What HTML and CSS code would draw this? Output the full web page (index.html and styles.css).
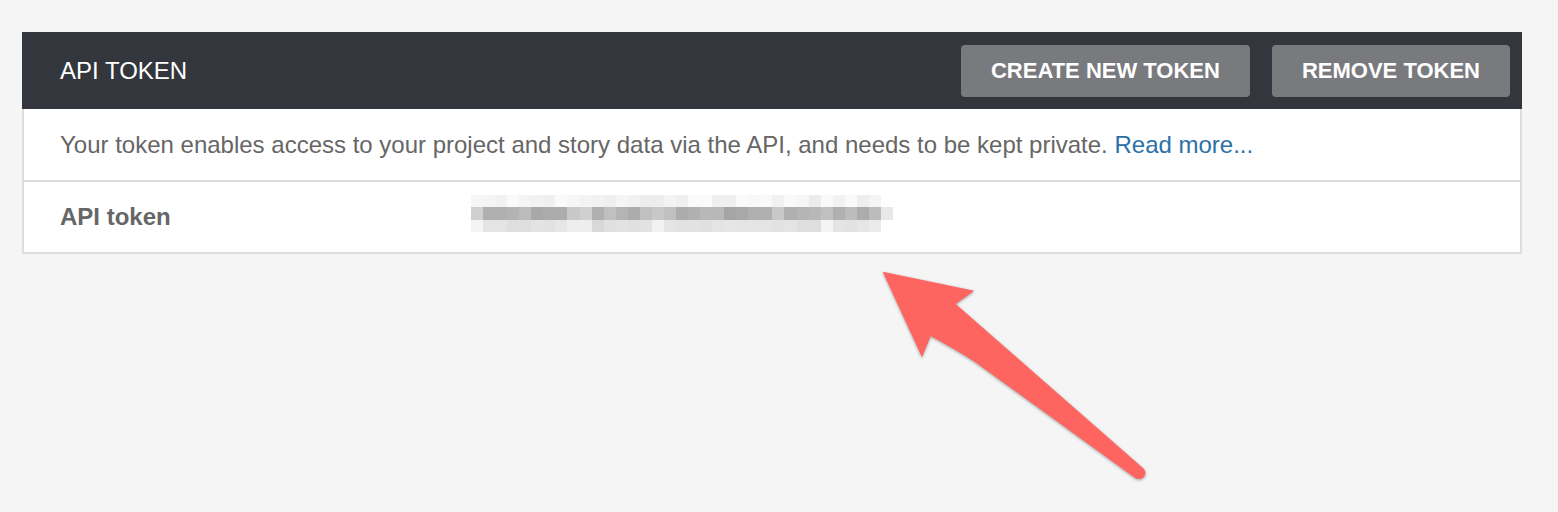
FILE: index.html
```html
<!DOCTYPE html>
<html>
<head>
<meta charset="utf-8">
<link rel="stylesheet" href="styles.css">
</head>
<body>
<section class="panel">
  <header class="panel-head">
    <h2 class="panel-title">API TOKEN</h2>
    <div class="actions">
      <button class="btn">CREATE NEW TOKEN</button>
      <button class="btn">REMOVE TOKEN</button>
    </div>
  </header>
  <div class="panel-body">
    <div class="row desc">Your token enables access to your project and story data via the API, and needs to be kept private. <a href="#" class="link">Read more...</a></div>
    <div class="row field">
      <span class="label">API token</span>
      <svg class="token" width="422" height="37" viewBox="0 0 35 3" preserveAspectRatio="none" shape-rendering="crispEdges">
        <g>
          <rect x="0" y="0" width="1" height="1" fill="#f6f6f6"/><rect x="1" y="0" width="1" height="1" fill="#f5f5f5"/><rect x="2" y="0" width="1" height="1" fill="#f2f2f2"/><rect x="3" y="0" width="1" height="1" fill="#fafafa"/><rect x="4" y="0" width="1" height="1" fill="#f4f4f4"/><rect x="5" y="0" width="1" height="1" fill="#f2f2f2"/><rect x="6" y="0" width="1" height="1" fill="#f0f0f0"/><rect x="7" y="0" width="1" height="1" fill="#fafafa"/><rect x="8" y="0" width="1" height="1" fill="#f6f6f6"/><rect x="9" y="0" width="1" height="1" fill="#f3f3f3"/><rect x="10" y="0" width="1" height="1" fill="#f2f2f2"/><rect x="11" y="0" width="1" height="1" fill="#efefef"/><rect x="12" y="0" width="1" height="1" fill="#f5f5f5"/><rect x="13" y="0" width="1" height="1" fill="#f2f2f2"/><rect x="14" y="0" width="1" height="1" fill="#ededed"/><rect x="15" y="0" width="1" height="1" fill="#ededed"/><rect x="16" y="0" width="1" height="1" fill="#f3f3f3"/><rect x="17" y="0" width="1" height="1" fill="#f0f0f0"/><rect x="18" y="0" width="1" height="1" fill="#fafafa"/><rect x="19" y="0" width="1" height="1" fill="#fafafa"/><rect x="20" y="0" width="1" height="1" fill="#efefef"/><rect x="21" y="0" width="1" height="1" fill="#efefef"/><rect x="22" y="0" width="1" height="1" fill="#fafafa"/><rect x="23" y="0" width="1" height="1" fill="#f8f8f8"/><rect x="24" y="0" width="1" height="1" fill="#f9f9f9"/><rect x="25" y="0" width="1" height="1" fill="#f1f1f1"/><rect x="26" y="0" width="1" height="1" fill="#f9f9f9"/><rect x="27" y="0" width="1" height="1" fill="#f6f6f6"/><rect x="28" y="0" width="1" height="1" fill="#ececec"/><rect x="29" y="0" width="1" height="1" fill="#f9f9f9"/><rect x="30" y="0" width="1" height="1" fill="#f2f2f2"/><rect x="31" y="0" width="1" height="1" fill="#f9f9f9"/><rect x="32" y="0" width="1" height="1" fill="#eeeeee"/><rect x="33" y="0" width="1" height="1" fill="#f4f4f4"/>
        </g>
        <g>
          <rect x="0" y="1" width="1" height="1" fill="#d0d0d0"/><rect x="1" y="1" width="1" height="1" fill="#b0b0b0"/><rect x="2" y="1" width="1" height="1" fill="#b0b0b0"/><rect x="3" y="1" width="1" height="1" fill="#b3b3b3"/><rect x="4" y="1" width="1" height="1" fill="#bcbcbc"/><rect x="5" y="1" width="1" height="1" fill="#a8a8a8"/><rect x="6" y="1" width="1" height="1" fill="#acacac"/><rect x="7" y="1" width="1" height="1" fill="#acacac"/><rect x="8" y="1" width="1" height="1" fill="#c8c8c8"/><rect x="9" y="1" width="1" height="1" fill="#d0d0d0"/><rect x="10" y="1" width="1" height="1" fill="#b0b0b0"/><rect x="11" y="1" width="1" height="1" fill="#c0c0c0"/><rect x="12" y="1" width="1" height="1" fill="#b4b4b4"/><rect x="13" y="1" width="1" height="1" fill="#acacac"/><rect x="14" y="1" width="1" height="1" fill="#c0c0c0"/><rect x="15" y="1" width="1" height="1" fill="#c8c8c8"/><rect x="16" y="1" width="1" height="1" fill="#c0c0c0"/><rect x="17" y="1" width="1" height="1" fill="#acacac"/><rect x="18" y="1" width="1" height="1" fill="#b0b0b0"/><rect x="19" y="1" width="1" height="1" fill="#b8b8b8"/><rect x="20" y="1" width="1" height="1" fill="#b8b8b8"/><rect x="21" y="1" width="1" height="1" fill="#a5a5a5"/><rect x="22" y="1" width="1" height="1" fill="#a8a8a8"/><rect x="23" y="1" width="1" height="1" fill="#b0b0b0"/><rect x="24" y="1" width="1" height="1" fill="#b0b0b0"/><rect x="25" y="1" width="1" height="1" fill="#c8c8c8"/><rect x="26" y="1" width="1" height="1" fill="#b0b0b0"/><rect x="27" y="1" width="1" height="1" fill="#b4b4b4"/><rect x="28" y="1" width="1" height="1" fill="#b8b8b8"/><rect x="29" y="1" width="1" height="1" fill="#c0c0c0"/><rect x="30" y="1" width="1" height="1" fill="#b0b0b0"/><rect x="31" y="1" width="1" height="1" fill="#bcbcbc"/><rect x="32" y="1" width="1" height="1" fill="#acacac"/><rect x="33" y="1" width="1" height="1" fill="#bcbcbc"/><rect x="34" y="1" width="1" height="1" fill="#e8e8e8"/>
        </g>
        <g>
          <rect x="0" y="2" width="1" height="1" fill="#f4f4f4"/><rect x="1" y="2" width="1" height="1" fill="#e4e4e4"/><rect x="2" y="2" width="1" height="1" fill="#e4e4e4"/><rect x="3" y="2" width="1" height="1" fill="#dedede"/><rect x="4" y="2" width="1" height="1" fill="#dedede"/><rect x="5" y="2" width="1" height="1" fill="#e4e4e4"/><rect x="6" y="2" width="1" height="1" fill="#e2e2e2"/><rect x="7" y="2" width="1" height="1" fill="#e6e6e6"/><rect x="8" y="2" width="1" height="1" fill="#eeeeee"/><rect x="9" y="2" width="1" height="1" fill="#eeeeee"/><rect x="10" y="2" width="1" height="1" fill="#d8d8d8"/><rect x="11" y="2" width="1" height="1" fill="#e0e0e0"/><rect x="12" y="2" width="1" height="1" fill="#e2e2e2"/><rect x="13" y="2" width="1" height="1" fill="#e0e0e0"/><rect x="14" y="2" width="1" height="1" fill="#e2e2e2"/><rect x="15" y="2" width="1" height="1" fill="#f2f2f2"/><rect x="16" y="2" width="1" height="1" fill="#e4e4e4"/><rect x="17" y="2" width="1" height="1" fill="#e2e2e2"/><rect x="18" y="2" width="1" height="1" fill="#e2e2e2"/><rect x="19" y="2" width="1" height="1" fill="#e0e0e0"/><rect x="20" y="2" width="1" height="1" fill="#e4e4e4"/><rect x="21" y="2" width="1" height="1" fill="#e6e6e6"/><rect x="22" y="2" width="1" height="1" fill="#e4e4e4"/><rect x="23" y="2" width="1" height="1" fill="#e4e4e4"/><rect x="24" y="2" width="1" height="1" fill="#e4e4e4"/><rect x="25" y="2" width="1" height="1" fill="#e2e2e2"/><rect x="26" y="2" width="1" height="1" fill="#e4e4e4"/><rect x="27" y="2" width="1" height="1" fill="#dedede"/><rect x="28" y="2" width="1" height="1" fill="#dedede"/><rect x="29" y="2" width="1" height="1" fill="#f4f4f4"/><rect x="30" y="2" width="1" height="1" fill="#e4e4e4"/><rect x="31" y="2" width="1" height="1" fill="#e2e2e2"/><rect x="32" y="2" width="1" height="1" fill="#e6e6e6"/><rect x="33" y="2" width="1" height="1" fill="#eaeaea"/>
        </g>
      </svg>
    </div>
  </div>
</section>
<svg class="annotation" width="1558" height="512" viewBox="0 0 1558 512">
  <path d="M882.7,271.7 L974.3,290.7 L955.7,304 L1143.5,468.5 Q1147.5,473 1143.5,477.5 Q1139,480.5 1134.5,477.5 L975,362 Q958,351 930.7,336 L922,357.3 Z" fill="#fe6561"/>
</svg>
</body>
</html>
```

FILE: styles.css
```css
html, body {
  margin: 0;
  padding: 0;
}
body {
  background: #f5f5f5;
  font-family: "Liberation Sans", Arial, Helvetica, sans-serif;
  width: 1558px;
  height: 512px;
  position: relative;
  overflow: hidden;
}
.panel {
  margin: 32px 0 0 22px;
  width: 1500px;
}
.panel-head {
  height: 77px;
  background: #33363d;
  display: flex;
  align-items: center;
  justify-content: space-between;
  padding: 0 12px 0 38px;
  box-sizing: border-box;
}
.panel-title {
  margin: 0;
  color: #ffffff;
  font-size: 24px;
  font-weight: normal;
}
.actions {
  display: flex;
  gap: 22px;
}
.btn {
  height: 52px;
  border: none;
  border-radius: 4px;
  background: #797a7e;
  color: #ffffff;
  font-family: "Liberation Sans", Arial, Helvetica, sans-serif;
  font-weight: bold;
  font-size: 22px;
  padding: 0 30px;
  cursor: pointer;
}
.panel-body {
  background: #ffffff;
  border-left: 2px solid #dddddd;
  border-right: 2px solid #dddddd;
}
.row {
  display: flex;
  align-items: center;
  padding-left: 36px;
  border-bottom: 2px solid #dddddd;
  color: #666666;
  font-size: 24px;
}
.desc {
  height: 71px;
  display: block;
  line-height: 71px;
}
.link {
  color: #2c70a8;
  text-decoration: none;
}
.field {
  height: 70px;
}
.label {
  font-weight: bold;
  width: 411px;
  flex: none;
}
.token {
  display: block;
  margin-top: -7px;
}
.annotation {
  position: absolute;
  left: 0;
  top: 0;
  pointer-events: none;
  filter: drop-shadow(0 1px 1.5px rgba(0, 0, 0, 0.35));
}
```
